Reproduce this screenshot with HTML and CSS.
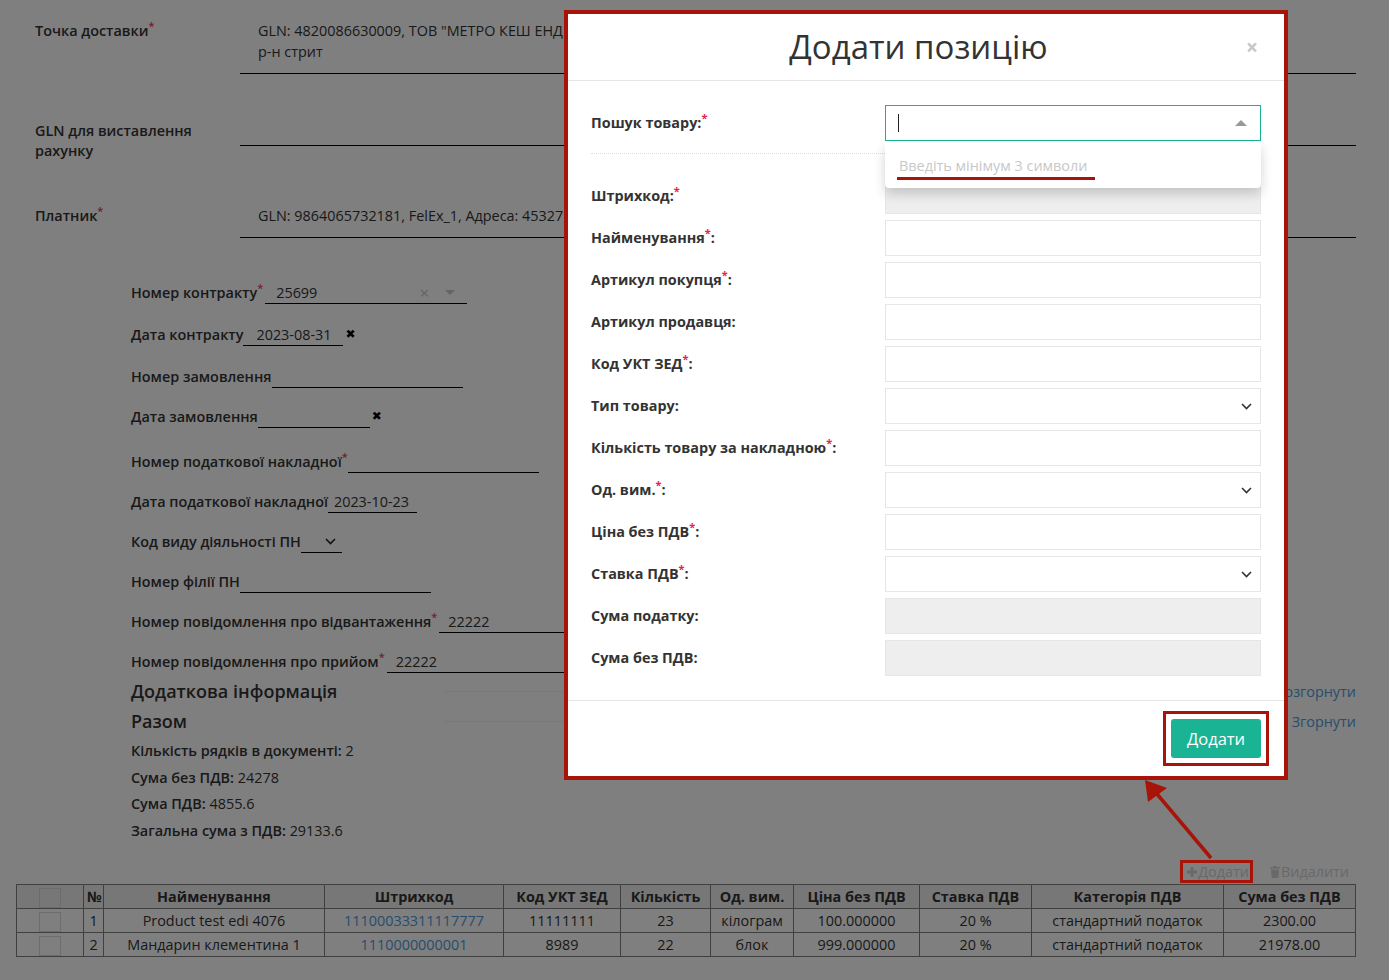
FILE: index.html
```html
<!DOCTYPE html>
<html lang="uk">
<head>
    <meta charset="UTF-8">
    <meta name="viewport" content="width=device-width, initial-scale=1.0">
    <title>Додати позицію</title>
    <link rel="stylesheet" href="styles.css">
</head>
<body>
    <div class="page">
        <section class="parties">
            <div class="party-row row-delivery">
                <div class="party-label">Точка доставки<sup>*</sup></div>
                <div class="party-value">GLN: 4820086630009, ТОВ "МЕТРО КЕШ ЕНД КЕРРІ",<br>р-н стрит</div>
            </div>
            <div class="party-row row-gln">
                <div class="party-label">GLN для виставлення рахунку</div>
                <div class="party-value"></div>
            </div>
            <div class="party-row row-payer">
                <div class="party-label">Платник<sup>*</sup></div>
                <div class="party-value">GLN: 9864065732181, FelEx_1, Адреса: 45327, Київ</div>
            </div>
        </section>

        <section class="doc-fields">
            <div class="field">
                <span class="field-label">Номер контракту<sup>*</sup></span>
                <span class="field-input w-contract">25699
                    <span class="select-clear">×</span>
                    <span class="select-caret"></span>
                </span>
            </div>
            <div class="field field-wide">
                <span class="field-label">Дата контракту</span>
                <span class="field-input w-date">2023-08-31</span>
                <span class="date-clear">✖</span>
            </div>
            <div class="field field-wide">
                <span class="field-label">Номер замовлення</span>
                <span class="field-input w-long"></span>
            </div>
            <div class="field">
                <span class="field-label">Дата замовлення</span>
                <span class="field-input w-date-empty"></span>
                <span class="date-clear">✖</span>
            </div>
            <div class="field field-spaced">
                <span class="field-label">Номер податкової накладної<sup>*</sup></span>
                <span class="field-input w-long"></span>
            </div>
            <div class="field">
                <span class="field-label">Дата податкової накладної</span>
                <span class="field-input w-taxdate">2023-10-23</span>
            </div>
            <div class="field">
                <span class="field-label">Код виду діяльності ПН</span>
                <span class="field-input w-activity">
                    <svg class="chevron" width="11" height="7" viewBox="0 0 11 7"><polyline points="1,1 5.5,5.5 10,1" fill="none" stroke="#222" stroke-width="1.6"/></svg>
                </span>
            </div>
            <div class="field">
                <span class="field-label">Номер філії ПН</span>
                <span class="field-input w-long"></span>
            </div>
            <div class="field">
                <span class="field-label">Номер повідомлення про відвантаження<sup>*</sup></span>
                <span class="field-input text-input">22222</span>
            </div>
            <div class="field">
                <span class="field-label">Номер повідомлення про прийом<sup>*</sup></span>
                <span class="field-input text-input">22222</span>
            </div>
        </section>

        <div class="panel-head first">
            <h3>Додаткова інформація</h3>
            <span class="dots"></span>
            <a href="#">Розгорнути</a>
        </div>
        <div class="panel-head">
            <h3>Разом</h3>
            <span class="dots"></span>
            <a href="#">Згорнути</a>
        </div>

        <div class="totals">
            <p><b>Кількість рядків в документі:</b> 2</p>
            <p><b>Сума без ПДВ:</b> 24278</p>
            <p><b>Сума ПДВ:</b> 4855.6</p>
            <p><b>Загальна сума з ПДВ:</b> 29133.6</p>
        </div>

        <div class="toolbar">
            <span class="tool marked">
                <svg width="10" height="10" viewBox="0 0 10 10"><path d="M3.6 0h2.8v3.6H10v2.8H6.4V10H3.6V6.4H0V3.6h3.6z" fill="currentColor"/></svg>Додати</span>
            <span class="tool">
                <svg width="10" height="12" viewBox="0 0 10 12"><path d="M3.5 0h3v1H10v1.6H0V1h3.5zM1 3.4h8L8.3 12H1.7z" fill="currentColor"/></svg>Видалити</span>
        </div>

        <table class="lines">
            <colgroup>
                <col style="width:67px"><col style="width:20px"><col style="width:221px"><col style="width:179px">
                <col style="width:117px"><col style="width:90px"><col style="width:83px"><col style="width:126px">
                <col style="width:112px"><col style="width:192px"><col>
            </colgroup>
            <thead>
                <tr>
                    <th><span class="check"></span></th>
                    <th>№</th>
                    <th>Найменування</th>
                    <th>Штрихкод</th>
                    <th>Код УКТ ЗЕД</th>
                    <th>Кількість</th>
                    <th>Од. вим.</th>
                    <th>Ціна без ПДВ</th>
                    <th>Ставка ПДВ</th>
                    <th>Категорія ПДВ</th>
                    <th>Сума без ПДВ</th>
                </tr>
            </thead>
            <tbody>
                <tr>
                    <td><span class="check"></span></td>
                    <td>1</td>
                    <td>Product test edi 4076</td>
                    <td><a href="#">11100033311117777</a></td>
                    <td>11111111</td>
                    <td>23</td>
                    <td>кілограм</td>
                    <td>100.000000</td>
                    <td>20 %</td>
                    <td>стандартний податок</td>
                    <td>2300.00</td>
                </tr>
                <tr>
                    <td><span class="check"></span></td>
                    <td>2</td>
                    <td>Мандарин клементина 1</td>
                    <td><a href="#">1110000000001</a></td>
                    <td>8989</td>
                    <td>22</td>
                    <td>блок</td>
                    <td>999.000000</td>
                    <td>20 %</td>
                    <td>стандартний податок</td>
                    <td>21978.00</td>
                </tr>
            </tbody>
        </table>
    </div>

    <div class="backdrop"></div>

    <!-- вікно додавання позиції -->
    <div class="modal">
        <div class="modal-header">
            <h4 class="modal-title">Додати позицію</h4>
            <span class="modal-close">×</span>
        </div>
        <div class="modal-body">
            <div class="form-row search-row">
                <label class="form-label">Пошук товару:<sup>*</sup></label>
                <div class="form-control search-box">
                    <span class="text-caret"></span>
                    <span class="search-arrow"></span>
                    <div class="search-drop">
                        Введіть мінімум 3 символи
                        <span class="drop-mark"></span>
                    </div>
                </div>
            </div>
            <div class="form-row">
                <label class="form-label">Штрихкод:<sup>*</sup></label>
                <div class="form-control disabled"></div>
            </div>
            <div class="form-row">
                <label class="form-label">Найменування<sup>*</sup>:</label>
                <div class="form-control"></div>
            </div>
            <div class="form-row">
                <label class="form-label">Артикул покупця<sup>*</sup>:</label>
                <div class="form-control"></div>
            </div>
            <div class="form-row">
                <label class="form-label">Артикул продавця:</label>
                <div class="form-control"></div>
            </div>
            <div class="form-row">
                <label class="form-label">Код УКТ ЗЕД<sup>*</sup>:</label>
                <div class="form-control"></div>
            </div>
            <div class="form-row">
                <label class="form-label">Тип товару:</label>
                <div class="form-control select">
                    <svg class="chevron" width="11" height="7" viewBox="0 0 11 7"><polyline points="1,1 5.5,5.5 10,1" fill="none" stroke="#333" stroke-width="1.6"/></svg>
                </div>
            </div>
            <div class="form-row">
                <label class="form-label">Кількість товару за накладною<sup>*</sup>:</label>
                <div class="form-control"></div>
            </div>
            <div class="form-row">
                <label class="form-label">Од. вим.<sup>*</sup>:</label>
                <div class="form-control select">
                    <svg class="chevron" width="11" height="7" viewBox="0 0 11 7"><polyline points="1,1 5.5,5.5 10,1" fill="none" stroke="#333" stroke-width="1.6"/></svg>
                </div>
            </div>
            <div class="form-row">
                <label class="form-label">Ціна без ПДВ<sup>*</sup>:</label>
                <div class="form-control"></div>
            </div>
            <div class="form-row">
                <label class="form-label">Ставка ПДВ<sup>*</sup>:</label>
                <div class="form-control select">
                    <svg class="chevron" width="11" height="7" viewBox="0 0 11 7"><polyline points="1,1 5.5,5.5 10,1" fill="none" stroke="#333" stroke-width="1.6"/></svg>
                </div>
            </div>
            <div class="form-row">
                <label class="form-label">Сума податку:</label>
                <div class="form-control disabled"></div>
            </div>
            <div class="form-row">
                <label class="form-label">Сума без ПДВ:</label>
                <div class="form-control disabled"></div>
            </div>
        </div>
        <div class="modal-footer">
            <span class="btn-mark"><button class="btn-add">Додати</button></span>
        </div>
    </div>

    <svg class="pointer" width="1389" height="980" viewBox="0 0 1389 980">
        <line x1="1211" y1="858" x2="1157" y2="794" stroke="#a81409" stroke-width="3.5"/>
        <polygon points="1145,780 1167,788 1148,802" fill="#a81409"/>
    </svg>
</body>
</html>
```

FILE: styles.css
```css
* {
    box-sizing: border-box;
}

body {
    margin: 0;
    background-color: #fff;
    color: #333;
    font-family: "Open Sans", "Noto Sans", sans-serif;
    font-size: 14.4px;
}

.page {
    padding: 0 33px 10px 16px;
}

sup {
    color: #e0405a;
    font-size: 11px;
    line-height: 0;
    vertical-align: 6px;
}

/* контрагенти */

.party-row {
    display: grid;
    grid-template-columns: 205px 1fr;
    align-items: start;
    padding-left: 19px;
}

.party-label {
    padding-top: 10px;
    font-weight: 600;
    line-height: 21px;
}

.party-value {
    min-height: 42px;
    padding: 10px 18px;
    border-bottom: 1px solid #000;
    line-height: 21px;
    white-space: nowrap;
    overflow: hidden;
}

.row-delivery {
    margin-top: 10px;
}

.row-delivery .party-value {
    padding-bottom: 11px;
}

.row-gln {
    margin-top: 30px;
}

.row-gln .party-label {
    width: 170px;
    padding-top: 17px;
    line-height: 20px;
}

.row-payer {
    margin-top: 34px;
}

.row-payer .party-value {
    padding-bottom: 11px;
}

/* поля документа */

.doc-fields {
    margin-top: 44px;
    padding-left: 115px;
}

.field {
    display: flex;
    align-items: flex-start;
    height: 22px;
    line-height: 21px;
}

.field + .field {
    margin-top: 18px;
}

.field + .field-wide {
    margin-top: 20px;
}

.field + .field-spaced {
    margin-top: 23px;
}

.field-label {
    font-weight: 600;
    white-space: nowrap;
}

.field-input {
    display: flex;
    align-items: center;
    height: 22px;
    border-bottom: 1px solid #000;
}

.w-contract {
    width: 202px;
    margin-left: 2px;
    padding-left: 11px;
}

.select-clear {
    margin-left: auto;
    color: #c8c8c8;
    font-size: 17px;
}

.select-caret {
    width: 0;
    height: 0;
    margin: 0 12px 0 16px;
    border-top: 5px solid #c8c8c8;
    border-left: 5px solid transparent;
    border-right: 5px solid transparent;
}

.w-date {
    width: 100px;
    padding-left: 13px;
}

.w-date-empty {
    width: 112px;
}

.date-clear {
    margin-left: 2px;
    font-family: "DejaVu Sans", sans-serif;
    font-size: 12px;
    color: #000;
}

.w-long {
    width: 191px;
}

.w-taxdate {
    width: 89px;
    padding-left: 6px;
}

.w-activity {
    width: 41px;
    justify-content: flex-end;
    padding-right: 6px;
}

.text-input {
    width: 240px;
    margin-left: 2px;
    padding-left: 9px;
}

/* підсумки */

.panel-head {
    display: flex;
    align-items: center;
    height: 30px;
    padding-left: 115px;
}

.panel-head.first {
    margin-top: 3px;
}

.panel-head h3 {
    width: 314px;
    margin: 0;
    font-size: 18px;
    font-weight: 600;
}

.dots {
    flex: 1;
    margin-right: 6px;
    border-top: 1px dotted #e4e4e4;
}

.panel-head a,
.lines a {
    color: #4f9ad8;
    text-decoration: none;
}

.totals {
    margin-top: 2px;
    padding-left: 115px;
}

.totals p {
    margin: 0;
    line-height: 26.6px;
}

.totals b {
    font-weight: 600;
}

/* таблиця позицій */

.toolbar {
    display: flex;
    justify-content: flex-end;
    gap: 20px;
    margin-top: 19px;
    padding-right: 7px;
    color: #d2d2d2;
    line-height: 17px;
}

.tool {
    display: flex;
    align-items: center;
    gap: 1px;
}

.marked {
    position: relative;
    padding: 0 1px 0 4px;
}

.marked::after {
    content: "";
    position: absolute;
    top: -3px;
    left: -3px;
    right: -3px;
    bottom: -3px;
    border: 3px solid #a81409;
    z-index: 15;
}

.lines {
    width: 100%;
    margin-top: 4px;
    border-collapse: collapse;
    table-layout: fixed;
}

.lines th,
.lines td {
    height: 24px;
    padding: 0 3px;
    border: 1px solid #808080;
    text-align: center;
    line-height: 20px;
    white-space: nowrap;
    overflow: hidden;
}

.lines th {
    background-color: #eee;
    font-weight: 700;
}

.check {
    display: inline-block;
    width: 22px;
    height: 20px;
    margin-top: 1px;
    border: 1px solid #d8d8d8;
    vertical-align: middle;
}

/* модальне вікно */

.backdrop {
    position: fixed;
    top: 0;
    left: 0;
    right: 0;
    bottom: 0;
    background-color: rgba(0, 0, 0, 0.5);
    z-index: 10;
}

.modal {
    position: absolute;
    left: 568px;
    top: 14px;
    width: 716px;
    background-color: #fff;
    outline: 4px solid #a81409;
    z-index: 20;
}

.modal-header {
    display: flex;
    align-items: center;
    height: 67px;
    padding: 0 23px;
    border-bottom: 1px solid #e5e5e5;
}

.modal-title {
    flex: 1;
    margin: 0;
    text-align: center;
    font-size: 33px;
    font-weight: 500;
    line-height: 1.1;
}

.modal-close {
    width: 15px;
    color: #c6c6c6;
    font-size: 21px;
    font-weight: 700;
    line-height: 1;
}

.modal-body {
    padding: 24px 23px;
}

.form-row {
    display: grid;
    grid-template-columns: 294px 1fr;
    align-items: center;
}

.form-row + .form-row {
    margin-top: 6px;
}

.search-row {
    position: relative;
    z-index: 2;
    padding-bottom: 12px;
    margin-bottom: 24px;
    border-bottom: 1px dotted #dcdcdc;
}

.form-label {
    font-weight: 700;
    line-height: 20px;
}

.form-label sup {
    color: #e3244a;
}

.form-control {
    position: relative;
    height: 36px;
    border: 1px solid #e5e6e7;
    background-color: #fff;
}

.form-control.disabled {
    background-color: #eee;
}

.form-control.select {
    display: flex;
    align-items: center;
    justify-content: flex-end;
    padding-right: 8px;
}

.search-box {
    display: flex;
    align-items: center;
    padding-left: 12px;
    border-color: #1ab394;
}

.text-caret {
    width: 1px;
    height: 18px;
    background-color: #222;
}

.search-arrow {
    margin-left: auto;
    margin-right: 13px;
    width: 0;
    height: 0;
    border-bottom: 6px solid #999;
    border-left: 6px solid transparent;
    border-right: 6px solid transparent;
}

.search-drop {
    position: absolute;
    top: 36px;
    left: -1px;
    right: -1px;
    height: 46px;
    padding: 14px 14px;
    background-color: #fff;
    border-radius: 0 0 4px 4px;
    box-shadow: 0 6px 12px rgba(0, 0, 0, 0.175);
    color: #c8c8c8;
    line-height: 20px;
}

.drop-mark {
    position: absolute;
    left: 12px;
    top: 35px;
    width: 198px;
    height: 3px;
    background-color: #a81409;
}

.modal-footer {
    display: flex;
    justify-content: flex-end;
    padding: 10px 15px;
    border-top: 1px solid #e5e5e5;
}

.btn-mark {
    display: inline-flex;
    padding: 5px;
    border: 3px solid #a81409;
}

.btn-add {
    width: 90px;
    height: 39px;
    border: 0;
    border-radius: 3px;
    background-color: #1ab394;
    color: #fff;
    font-family: "Open Sans", sans-serif;
    font-size: 16.5px;
}

.pointer {
    position: absolute;
    top: 0;
    left: 0;
    z-index: 30;
    pointer-events: none;
}
```
